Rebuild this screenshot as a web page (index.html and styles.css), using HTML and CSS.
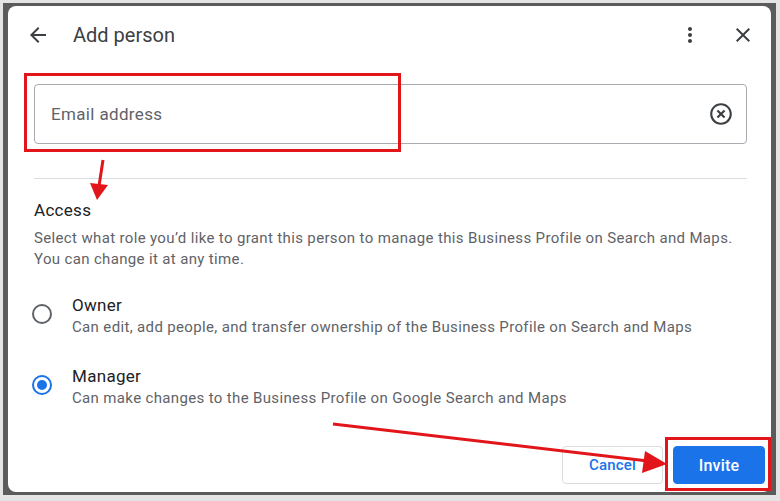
FILE: index.html
```html
<!DOCTYPE html>
<html lang="en">
<head>
<meta charset="utf-8">
<title>Add person</title>
<link rel="stylesheet" href="styles.css">
</head>
<body>
<div class="backdrop">
  <div class="dialog">
    <div class="header">
      <svg class="icon" viewBox="0 0 24 24"><path d="M20 11H7.83l5.59-5.59L12 4l-8 8 8 8 1.41-1.41L7.83 13H20v-2z"/></svg>
      <div class="title">Add person</div>
      <svg class="icon" viewBox="0 0 24 24"><path d="M12 8c1.1 0 2-.9 2-2s-.9-2-2-2-2 .9-2 2 .9 2 2 2zm0 2c-1.1 0-2 .9-2 2s.9 2 2 2 2-.9 2-2-.9-2-2-2zm0 6c-1.1 0-2 .9-2 2s.9 2 2 2 2-.9 2-2-.9-2-2-2z"/></svg>
      <svg class="icon close" viewBox="0 0 24 24"><path d="M19 6.41L17.59 5 12 10.59 6.41 5 5 6.41 10.59 12 5 17.59 6.41 19 12 13.41 17.59 19 19 17.59 13.41 12z"/></svg>
    </div>
    <div class="content">
      <div class="field">
        <span class="placeholder">Email address</span>
        <svg class="clear" viewBox="0 0 24 24"><path d="M14.59 8L12 10.59 9.41 8 8 9.41 10.59 12 8 14.59 9.41 16 12 13.41 14.59 16 16 14.59 13.41 12 16 9.41 14.59 8zM12 2C6.47 2 2 6.47 2 12s4.47 10 10 10 10-4.47 10-10S17.53 2 12 2zm0 18c-4.41 0-8-3.59-8-8s3.59-8 8-8 8 3.59 8 8-3.59 8-8 8z"/></svg>
      </div>
      <div class="divider"></div>
      <div class="section-title">Access</div>
      <div class="section-desc">Select what role you’d like to grant this person to manage this Business Profile on Search and Maps.<br>You can change it at any time.</div>
      <div class="options">
        <div class="option">
          <span class="radio"></span>
          <div class="option-text">
            <div class="option-name">Owner</div>
            <div class="option-desc">Can edit, add people, and transfer ownership of the Business Profile on Search and Maps</div>
          </div>
        </div>
        <div class="option">
          <span class="radio checked"></span>
          <div class="option-text">
            <div class="option-name">Manager</div>
            <div class="option-desc">Can make changes to the Business Profile on Google Search and Maps</div>
          </div>
        </div>
      </div>
    </div>
    <div class="footer">
      <button class="btn btn-cancel">Cancel</button>
      <button class="btn btn-invite">Invite</button>
    </div>
  </div>
</div>
<svg class="annotations" viewBox="0 0 780 501" width="780" height="501">
  <rect x="25.5" y="74.5" width="374" height="76" fill="none" stroke="#e2151b" stroke-width="3"/>
  <line x1="103" y1="160" x2="99" y2="186" stroke="#e2151b" stroke-width="3"/>
  <polygon points="90,183 108,185 97,200" fill="#e2151b"/>
  <rect x="666.5" y="438.5" width="103" height="51" fill="none" stroke="#e2151b" stroke-width="3"/>
  <line x1="333" y1="424" x2="648" y2="461" stroke="#e2151b" stroke-width="3"/>
  <polygon points="645,451 667,464 642,473" fill="#e2151b"/>
</svg>
</body>
</html>
```

FILE: styles.css
```css
* { box-sizing: border-box; }

html, body { margin: 0; }

body {
  position: relative;
  width: 780px;
  height: 501px;
  padding: 3px 4px 6px 3px;
  background: #e4e4e4;
  font-family: Roboto, "Noto Sans", Arial, sans-serif;
  overflow: hidden;
}

.backdrop {
  height: 100%;
  padding: 3px 5px;
  background: #5b5b5b;
}

.dialog {
  height: 486px;
  background: #fff;
  border-radius: 8px;
  display: flex;
  flex-direction: column;
}

.header {
  height: 58px;
  display: flex;
  align-items: center;
  padding: 0 16px 0 18px;
}

.icon {
  width: 24px;
  height: 24px;
  fill: #3c4043;
  flex: none;
}

.close { margin-left: 29px; }

.title {
  flex: 1;
  margin-left: 23px;
  font-size: 20px;
  color: #3c4043;
}

.content {
  padding: 0 24px 0 26px;
}

.field {
  margin-top: 20px;
  height: 60px;
  border: 1px solid #a8abb0;
  border-radius: 4px;
  display: flex;
  align-items: center;
  padding: 0 12px 0 16px;
}

.placeholder {
  flex: 1;
  font-size: 17px;
  letter-spacing: 0.35px;
  color: #5f6368;
}

.clear {
  width: 26px;
  height: 26px;
  fill: #3c4043;
}

.divider {
  margin-top: 34px;
  height: 1px;
  background: #dadce0;
}

.section-title {
  margin-top: 19px;
  font-size: 17px;
  line-height: 24px;
  letter-spacing: 0.3px;
  color: #202124;
}

.section-desc {
  margin-top: 6px;
  font-size: 15px;
  line-height: 21px;
  letter-spacing: 0.35px;
  color: #5f6368;
}

.options {
  margin-top: 23px;
  display: flex;
  flex-direction: column;
  gap: 27px;
}

.option {
  display: flex;
  align-items: center;
}

.radio {
  flex: none;
  width: 20px;
  height: 20px;
  margin: -3px 20px 0 -2px;
  border: 2px solid #5f6368;
  border-radius: 50%;
  display: flex;
  align-items: center;
  justify-content: center;
}

.radio.checked { border-color: #1a73e8; }

.radio.checked::after {
  content: "";
  width: 10px;
  height: 10px;
  border-radius: 50%;
  background: #1a73e8;
}

.option-name {
  font-size: 17px;
  line-height: 24px;
  letter-spacing: 0.3px;
  color: #202124;
}

.option-desc {
  font-size: 15px;
  line-height: 20px;
  letter-spacing: 0.35px;
  color: #5f6368;
}

.footer {
  margin-top: auto;
  display: flex;
  justify-content: flex-end;
  gap: 10px;
  padding: 0 6px 8px 0;
}

.btn {
  height: 38px;
  border-radius: 4px;
  font-family: Roboto, "Noto Sans", Arial, sans-serif;
  font-size: 15px;
  font-weight: 500;
  letter-spacing: 0.2px;
  cursor: pointer;
}

.btn-cancel {
  width: 101px;
  background: #fff;
  border: 1px solid #dadce0;
  color: #1a73e8;
}

.btn-invite {
  width: 92px;
  background: #1a73e8;
  border: 1px solid #1a73e8;
  color: #fff;
  font-size: 16px;
}

.annotations {
  position: absolute;
  top: 0;
  left: 0;
  pointer-events: none;
}
```
